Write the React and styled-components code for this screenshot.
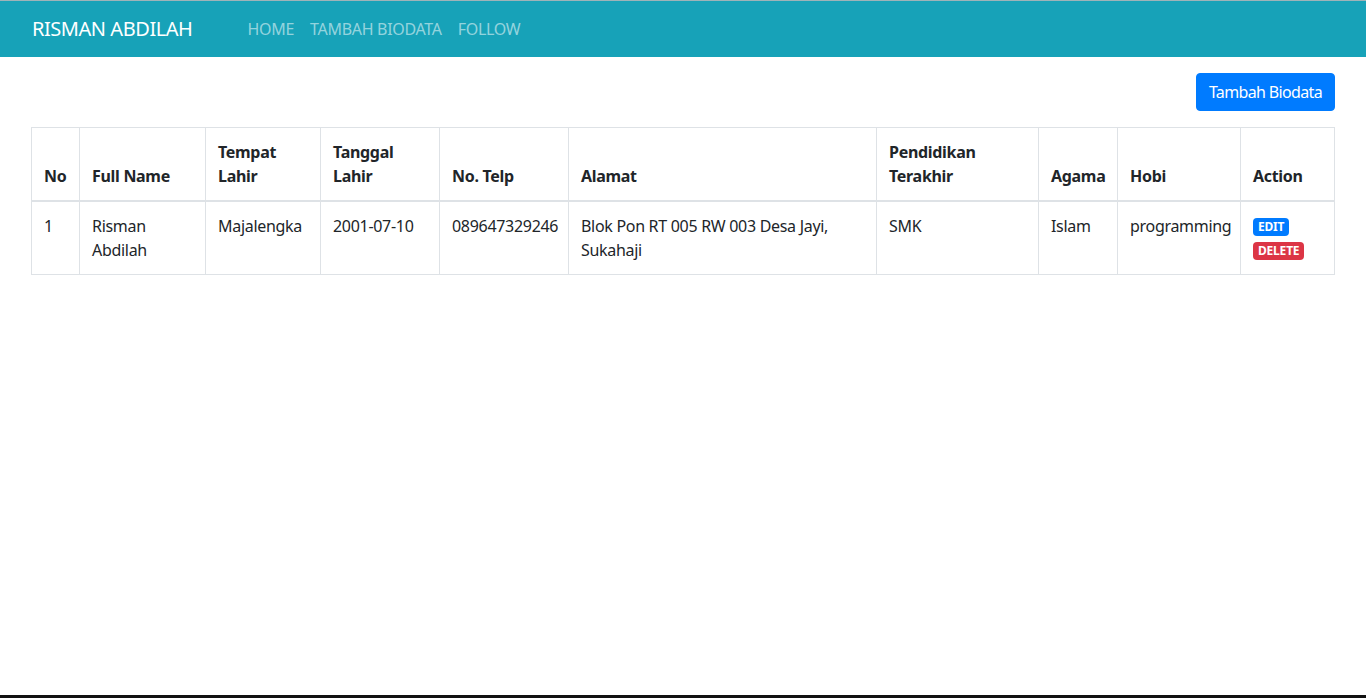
import React from "react";
import styled, { createGlobalStyle } from "styled-components";

const Global = createGlobalStyle`
  html, body { margin: 0; padding: 0; background: #fff; }
  body {
    font-family: "Noto Sans", "Open Sans", sans-serif;
    font-size: 16px;
    line-height: 1.5;
    color: #212529;
  }
  * { box-sizing: border-box; }
`;

const Page = styled.div`
  min-height: 698px;
  display: flex;
  flex-direction: column;
`;

const Navbar = styled.nav`
  height: 57px;
  background: #17a2b8;
  border-top: 1px solid #9fb3b8;
  display: flex;
  align-items: center;
  padding: 0 32px;
`;

const Brand = styled.a`
  color: #fff;
  font-size: 20px;
  line-height: 30px;
  text-decoration: none;
  margin-right: 55px;
  letter-spacing: -0.45px;
`;

const NavList = styled.div`
  display: flex;
`;

const NavLink = styled.a`
  color: rgba(255, 255, 255, 0.55);
  font-size: 16px;
  padding: 0 8px;
  text-decoration: none;
  letter-spacing: -0.3px;
  &:first-child { padding-left: 0; }
`;

const Main = styled.main`
  flex: 1;
  padding: 16px 31px;
`;

const Toolbar = styled.div`
  display: flex;
  justify-content: flex-end;
  margin-bottom: 16px;
`;

const Button = styled.button`
  background: #007bff;
  color: #fff;
  border: 1px solid #007bff;
  border-radius: 4px;
  padding: 6px 12px;
  font-family: inherit;
  font-size: 16px;
  line-height: 24px;
  letter-spacing: -0.65px;
`;

const Table = styled.table`
  width: 1303px;
  table-layout: fixed;
  border-collapse: collapse;
`;

const Th = styled.th`
  border: 1px solid #dee2e6;
  border-bottom: 2px solid #dee2e6;
  padding: 12px;
  text-align: left;
  vertical-align: bottom;
  font-weight: 700;
  letter-spacing: -0.3px;
`;

const Td = styled.td`
  border: 1px solid #dee2e6;
  padding: 12px;
  vertical-align: top;
  letter-spacing: -0.3px;
`;

const Badge = styled.span`
  display: inline-block;
  padding: 3px 5px;
  font-size: 12px;
  font-weight: 700;
  line-height: 1;
  border-radius: 4px;
  color: #fff;
  background: ${(p) => (p.$variant === "danger" ? "#dc3545" : "#007bff")};
  letter-spacing: -0.2px;
`;

const ActionStack = styled.div`
  display: flex;
  flex-direction: column;
  align-items: flex-start;
  gap: 6px;
  padding-top: 4px;
`;

const BottomBar = styled.div`
  height: 3px;
  background: #111;
`;

const cols = [
  { key: "no", label: "No", w: 48 },
  { key: "name", label: "Full Name", w: 126 },
  { key: "tempat", label: "Tempat Lahir", w: 115 },
  { key: "tgl", label: "Tanggal Lahir", w: 119 },
  { key: "telp", label: "No. Telp", w: 129 },
  { key: "alamat", label: "Alamat", w: 308 },
  { key: "pend", label: "Pendidikan Terakhir", w: 162 },
  { key: "agama", label: "Agama", w: 79 },
  { key: "hobi", label: "Hobi", w: 123 },
  { key: "action", label: "Action", w: 94 },
];

const rows = [
  {
    no: "1",
    name: "Risman Abdilah",
    tempat: "Majalengka",
    tgl: "2001-07-10",
    telp: "089647329246",
    alamat: "Blok Pon RT 005 RW 003 Desa Jayi, Sukahaji",
    pend: "SMK",
    agama: "Islam",
    hobi: "programming",
  },
];

export default function App() {
  return (
    <Page>
      <Global />
      <Navbar>
        <Brand href="#">RISMAN ABDILAH</Brand>
        <NavList>
          <NavLink href="#">HOME</NavLink>
          <NavLink href="#">TAMBAH BIODATA</NavLink>
          <NavLink href="#">FOLLOW</NavLink>
        </NavList>
      </Navbar>
      <Main>
        <Toolbar>
          <Button>Tambah Biodata</Button>
        </Toolbar>
        <Table>
          <colgroup>
            {cols.map((c) => (
              <col key={c.key} style={{ width: c.w }} />
            ))}
          </colgroup>
          <thead>
            <tr>
              {cols.map((c) => (
                <Th key={c.key}>{c.label}</Th>
              ))}
            </tr>
          </thead>
          <tbody>
            {rows.map((r) => (
              <tr key={r.no}>
                {cols.map((c) =>
                  c.key === "action" ? (
                    <Td key={c.key}>
                      <ActionStack>
                        <Badge>EDIT</Badge>
                        <Badge $variant="danger">DELETE</Badge>
                      </ActionStack>
                    </Td>
                  ) : (
                    <Td key={c.key}>{r[c.key]}</Td>
                  )
                )}
              </tr>
            ))}
          </tbody>
        </Table>
      </Main>
      <BottomBar />
    </Page>
  );
}
